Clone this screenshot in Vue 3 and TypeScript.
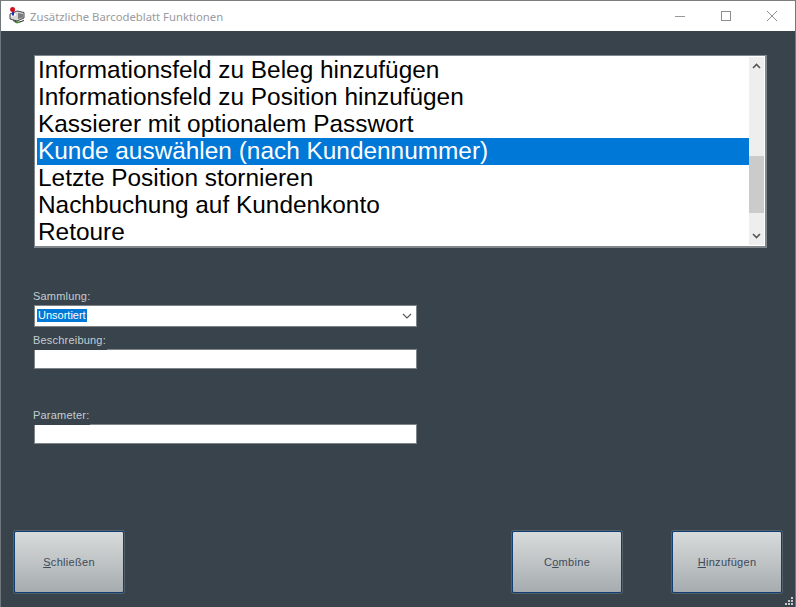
<script setup lang="ts">
const items = [
  'Informationsfeld zu Beleg hinzufügen',
  'Informationsfeld zu Position hinzufügen',
  'Kassierer mit optionalem Passwort',
  'Kunde auswählen (nach Kundennummer)',
  'Letzte Position stornieren',
  'Nachbuchung auf Kundenkonto',
  'Retoure'
]
const selected = 3
</script>

<template>
  <div class="window">
    <header class="titlebar">
      <svg class="app-icon" width="16" height="17" viewBox="0 0 16 17">
        <path d="M4 13L9 15L15 13V14L9 16L4 14Z" fill="#222" />
        <path d="M5 15L9 14.5L12 15L8 16.5Z" fill="#3f8f2a" />
        <path d="M1 7L8 4L15 5.5V11L8 14L1 12Z" fill="#d4d8d8" stroke="#333" stroke-width="0.9" />
        <path d="M9 6L14 7V10.5L9 12Z" fill="#7c7c7c" />
        <path d="M2 8L7 6.5V8.5L2 10Z" fill="#f6f6f6" />
        <rect x="3" y="3" width="2" height="5.5" fill="#2030c0" />
        <circle cx="3.6" cy="2.6" r="2.5" fill="#d01020" />
      </svg>
      <span class="title">Zusätzliche Barcodeblatt Funktionen</span>
      <div class="controls">
        <svg width="12" height="12" viewBox="0 0 12 12"><path d="M1 6.5H11" stroke="#9a9a9a" /></svg>
        <svg width="12" height="12" viewBox="0 0 12 12"><rect x="1.5" y="1.5" width="9" height="9" fill="none" stroke="#8f8f8f" /></svg>
        <svg width="12" height="12" viewBox="0 0 12 12"><path d="M1 1L11 11M11 1L1 11" stroke="#8f8f8f" /></svg>
      </div>
    </header>

    <main class="content">
      <div class="listbox">
        <ul class="rows">
          <li v-for="(item, i) in items" :key="item" :class="['row', { 'row--selected': i === selected }]">{{ item }}</li>
        </ul>
        <div class="scrollbar">
          <svg class="arrow" width="9" height="6" viewBox="0 0 9 6"><path d="M1 5L4.5 1.5L8 5" fill="none" stroke="#555" stroke-width="1.6" /></svg>
          <div class="track"><div class="thumb"></div></div>
          <svg class="arrow" width="9" height="6" viewBox="0 0 9 6"><path d="M1 1L4.5 4.5L8 1" fill="none" stroke="#555" stroke-width="1.6" /></svg>
        </div>
      </div>

      <form class="fields">
        <label class="label label--first">Sammlung:</label>
        <div class="combo">
          <span class="combo-value">Unsortiert</span>
          <svg width="10" height="6" viewBox="0 0 10 6"><path d="M1 1L5 5L9 1" fill="none" stroke="#555" stroke-width="1.1" /></svg>
        </div>
        <label class="label label--second">Beschreibung:</label>
        <div class="input"></div>
        <label class="label label--third">Parameter:</label>
        <div class="input"></div>
      </form>

      <footer class="actions">
        <button type="button" class="btn"><u>S</u>chließen</button>
        <div class="actions-right">
          <button type="button" class="btn">C<u>o</u>mbine</button>
          <button type="button" class="btn"><u>H</u>inzufügen</button>
        </div>
      </footer>

      <svg class="grip" width="9" height="9" viewBox="0 0 9 9" fill="#c4c8ca">
        <rect x="6" y="0" width="2" height="2" />
        <rect x="3" y="3" width="2" height="2" />
        <rect x="6" y="3" width="2" height="2" />
        <rect x="0" y="6" width="2" height="2" />
        <rect x="3" y="6" width="2" height="2" />
        <rect x="6" y="6" width="2" height="2" />
      </svg>
    </main>
  </div>
</template>

<style scoped>
.window {
  position: relative;
  display: flex;
  flex-direction: column;
  width: 796px;
  height: 607px;
  box-sizing: border-box;
  border-left: 1px solid #70777c;
  border-right: 1px solid #70777c;
  border-top: 1px solid #7d7d7d;
  font-family: 'Liberation Sans', Arial, sans-serif;
  background: #38434b;
  overflow: hidden;
}

.titlebar {
  display: flex;
  align-items: center;
  flex: 0 0 30px;
  background: #fff;
}

.app-icon {
  margin-left: 8px;
  margin-top: -1px;
}

.title {
  margin-left: 5px;
  margin-top: 1px;
  font-family: 'Noto Sans', sans-serif;
  font-size: 11.3px;
  color: #9a9aa0;
}

.controls {
  display: flex;
  align-items: center;
  gap: 34px;
  margin-left: auto;
  margin-right: 17px;
}

.content {
  position: relative;
  flex: 1;
  display: flex;
  flex-direction: column;
  padding: 24px 0 0 33px;
}

.listbox {
  display: flex;
  box-sizing: border-box;
  width: 733px;
  height: 193px;
  padding: 1px 1px 1px 2px;
  border: 1px solid #80878c;
  border-right-width: 2px;
  border-bottom-width: 2px;
  background: #fff;
}

.rows {
  flex: 1;
  margin: 0;
  padding: 0;
  list-style: none;
  font-size: 24.4px;
  color: #000;
}

.row {
  height: 27px;
  line-height: 25px;
  padding-left: 1px;
  white-space: nowrap;
}

.row--selected {
  background: #0078d7;
  color: #fff;
}

.scrollbar {
  display: flex;
  flex-direction: column;
  align-items: center;
  width: 15px;
  background: #eeeeee;
}

.arrow {
  flex: none;
  margin: 6px 0;
}

.track {
  flex: 1;
  width: 100%;
  padding-top: 81px;
  box-sizing: border-box;
}

.thumb {
  height: 57px;
  background: #cbcbcb;
}

.fields {
  display: flex;
  flex-direction: column;
  width: 383px;
  margin-top: 41px;
}

.label {
  position: relative;
  align-self: flex-start;
  height: 15px;
  padding-right: 1px;
  margin-left: -1px;
  font-size: 11px;
  line-height: 14px;
  letter-spacing: 0.2px;
  color: #c4cdd2;
  background: #38434b;
}

.label--first {
  margin-bottom: 1px;
}

/* Das Label verdeckt die obere Kante des Eingabefelds */
.label--second {
  height: 17px;
  margin-top: 6px;
  margin-bottom: -1px;
}

.label--third {
  height: 17px;
  margin-top: 39px;
  margin-bottom: -1px;
}

.combo,
.input {
  display: flex;
  align-items: center;
  box-sizing: border-box;
  width: 383px;
  border: 1px solid #7f8488;
  background: #fff;
}

.combo {
  justify-content: space-between;
  height: 22px;
  padding: 0 4px 0 2px;
}

.input {
  height: 20px;
}

.combo-value {
  padding: 0 1px;
  margin-top: -2px;
  font-size: 11px;
  line-height: 13px;
  color: #fff;
  background: #0078d7;
}

.actions {
  display: flex;
  justify-content: space-between;
  margin-top: auto;
  margin-left: -20px;
  margin-right: 13px;
  margin-bottom: 14px;
}

.actions-right {
  display: flex;
  gap: 50px;
}

.btn {
  width: 110px;
  height: 62px;
  padding: 0;
  border: 1px solid #123f73;
  border-radius: 2px;
  box-shadow: 0 0 0 1px #52606c;
  background: linear-gradient(#d8dbdb, #a6acaf);
  font-family: inherit;
  font-size: 11px;
  letter-spacing: 0.3px;
  color: #3d4a5c;
}

.grip {
  position: absolute;
  right: 1px;
  bottom: 1px;
}
</style>

<style>
html,
body {
  margin: 0;
  background: #38434b;
}
</style>
